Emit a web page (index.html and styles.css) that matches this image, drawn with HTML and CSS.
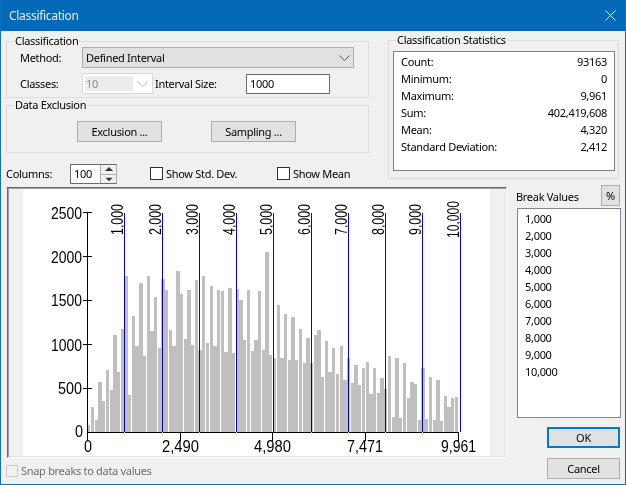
FILE: index.html
```html
<!DOCTYPE html>
<html lang="en">
<head>
<meta charset="utf-8">
<title>Classification</title>
<link rel="stylesheet" href="styles.css">
</head>
<body>
<div class="window">
  <header class="titlebar">
    <span class="title">Classification</span>
    <svg class="close" width="11" height="11" viewBox="0 0 11 11"><path d="M.5.5l10 10M10.500.5l-10 10"/></svg>
  </header>
  <div class="top">
    <div class="left-col">
      <fieldset class="group">
        <legend>Classification</legend>
        <div class="form-row">
          <span class="row-label">Method:</span>
          <div class="combo combo-method">
            <span>Defined Interval</span>
            <svg class="chev" width="11" height="6" viewBox="0 0 11 6"><path d="M.5.5l5 5 5-5"/></svg>
          </div>
        </div>
        <div class="form-row form-row-second">
          <span class="row-label">Classes:</span>
          <div class="combo-disabled">
            <span class="combo-disabled-value">10</span>
            <svg class="chev chev-light" width="11" height="6" viewBox="0 0 11 6"><path d="M.5.5l5 5 5-5"/></svg>
          </div>
          <span class="interval-label">Interval Size:</span>
          <div class="textbox interval-input">1000</div>
        </div>
      </fieldset>
      <fieldset class="group group-exclusion">
        <legend>Data Exclusion</legend>
        <div class="exclusion-buttons">
          <div class="btn btn-wide">Exclusion ...</div>
          <div class="btn btn-wide">Sampling ...</div>
        </div>
      </fieldset>
      <div class="columns-row">
        <span class="columns-label">Columns:</span>
        <div class="spin">
          <span class="spin-value">100</span>
          <div class="spin-buttons">
            <svg width="16" height="9" viewBox="0 0 16 9"><path class="tri" d="M8 2l4 4H4z"/></svg>
            <svg width="16" height="9" viewBox="0 0 16 9"><path class="tri" d="M4 3h8l-4 4z"/></svg>
          </div>
        </div>
        <div class="check check-std"><span class="box"></span><span>Show Std. Dev.</span></div>
        <div class="check"><span class="box"></span><span>Show Mean</span></div>
      </div>
    </div>
    <fieldset class="group group-stats">
      <legend>Classification Statistics</legend>
      <div class="stats">
        <div class="stat"><span>Count:</span><span>93163</span></div>
        <div class="stat"><span>Minimum:</span><span>0</span></div>
        <div class="stat"><span>Maximum:</span><span>9,961</span></div>
        <div class="stat"><span>Sum:</span><span>402,419,608</span></div>
        <div class="stat"><span>Mean:</span><span>4,320</span></div>
        <div class="stat"><span>Standard Deviation:</span><span>2,412</span></div>
      </div>
    </fieldset>
  </div>
  <div class="bottom">
    <div class="chart-col">
      <div class="chart-panel">
        <svg class="chart" width="467" height="267" viewBox="23 189 467 267">
          <g class="bars">
            <rect x="88" y="425" width="2" height="7"/><rect x="91" y="407" width="3" height="25"/><rect x="95" y="420" width="3" height="12"/><rect x="98" y="382" width="4" height="50"/><rect x="102" y="401" width="3" height="31"/><rect x="106" y="370" width="3" height="62"/><rect x="110" y="390" width="3" height="42"/><rect x="113" y="335" width="4" height="97"/><rect x="117" y="372" width="3" height="60"/><rect x="121" y="329" width="3" height="103"/>
            <rect x="124" y="276" width="4" height="156"/><rect x="128" y="395" width="3" height="37"/><rect x="132" y="316" width="3" height="116"/><rect x="135" y="346" width="4" height="86"/><rect x="139" y="283" width="4" height="149"/><rect x="143" y="356" width="3" height="76"/><rect x="147" y="276" width="3" height="156"/><rect x="150" y="331" width="4" height="101"/><rect x="154" y="297" width="3" height="135"/><rect x="158" y="348" width="3" height="84"/>
            <rect x="161" y="279" width="4" height="153"/><rect x="165" y="290" width="3" height="142"/><rect x="169" y="330" width="3" height="102"/><rect x="172" y="346" width="4" height="86"/><rect x="176" y="271" width="4" height="161"/><rect x="180" y="294" width="3" height="138"/><rect x="184" y="339" width="3" height="93"/><rect x="187" y="290" width="4" height="142"/><rect x="191" y="345" width="3" height="87"/><rect x="195" y="280" width="3" height="152"/>
            <rect x="198" y="350" width="4" height="82"/><rect x="202" y="276" width="3" height="156"/><rect x="206" y="343" width="3" height="89"/><rect x="210" y="286" width="3" height="146"/><rect x="213" y="346" width="4" height="86"/><rect x="217" y="290" width="3" height="142"/><rect x="221" y="291" width="3" height="141"/><rect x="224" y="352" width="4" height="80"/><rect x="228" y="288" width="4" height="144"/><rect x="232" y="353" width="3" height="79"/>
            <rect x="236" y="289" width="3" height="143"/><rect x="239" y="300" width="4" height="132"/><rect x="243" y="340" width="3" height="92"/><rect x="247" y="290" width="3" height="142"/><rect x="251" y="351" width="3" height="81"/><rect x="254" y="340" width="4" height="92"/><rect x="258" y="291" width="3" height="141"/><rect x="262" y="350" width="3" height="82"/><rect x="265" y="252" width="4" height="180"/><rect x="269" y="355" width="3" height="77"/>
            <rect x="273" y="358" width="3" height="74"/><rect x="277" y="305" width="3" height="127"/><rect x="280" y="358" width="4" height="74"/><rect x="284" y="314" width="3" height="118"/><rect x="288" y="360" width="3" height="72"/><rect x="291" y="317" width="4" height="115"/><rect x="295" y="360" width="3" height="72"/><rect x="299" y="329" width="3" height="103"/><rect x="303" y="363" width="3" height="69"/><rect x="306" y="338" width="4" height="94"/>
            <rect x="310" y="363" width="3" height="69"/><rect x="314" y="335" width="3" height="97"/><rect x="317" y="330" width="4" height="102"/><rect x="321" y="377" width="3" height="55"/><rect x="325" y="341" width="3" height="91"/><rect x="328" y="372" width="4" height="60"/><rect x="332" y="348" width="3" height="84"/><rect x="336" y="374" width="3" height="58"/><rect x="340" y="346" width="3" height="86"/><rect x="343" y="380" width="4" height="52"/>
            <rect x="347" y="358" width="3" height="74"/><rect x="351" y="383" width="3" height="49"/><rect x="354" y="365" width="4" height="67"/><rect x="358" y="385" width="3" height="47"/><rect x="362" y="368" width="3" height="64"/><rect x="366" y="362" width="3" height="70"/><rect x="369" y="394" width="4" height="38"/><rect x="373" y="368" width="3" height="64"/><rect x="377" y="393" width="3" height="39"/><rect x="380" y="378" width="4" height="54"/>
            <rect x="384" y="389" width="3" height="43"/><rect x="388" y="356" width="3" height="76"/><rect x="392" y="417" width="3" height="15"/><rect x="395" y="358" width="4" height="74"/><rect x="399" y="418" width="3" height="14"/><rect x="403" y="363" width="3" height="69"/><rect x="407" y="398" width="3" height="34"/><rect x="410" y="382" width="4" height="50"/><rect x="414" y="384" width="3" height="48"/><rect x="418" y="420" width="3" height="12"/>
            <rect x="421" y="368" width="4" height="64"/><rect x="425" y="419" width="3" height="13"/><rect x="429" y="377" width="3" height="55"/><rect x="433" y="420" width="3" height="12"/><rect x="436" y="380" width="4" height="52"/><rect x="440" y="421" width="3" height="11"/><rect x="444" y="396" width="3" height="36"/><rect x="447" y="407" width="4" height="25"/><rect x="451" y="398" width="3" height="34"/><rect x="455" y="397" width="3" height="35"/>
          </g>
          <g class="breaks">
            <rect x="124" y="213" width="1" height="219"/><rect x="162" y="213" width="1" height="219"/><rect x="199" y="213" width="1" height="219"/><rect x="236" y="213" width="1" height="219"/><rect x="273" y="213" width="1" height="219"/><rect x="311" y="213" width="1" height="219"/><rect x="348" y="213" width="1" height="219"/><rect x="385" y="213" width="1" height="219"/><rect x="422" y="213" width="1" height="219"/><rect x="460" y="213" width="1" height="219"/>
          </g>
          <g class="axes">
            <rect x="87" y="212" width="1" height="229"/><rect x="87" y="432" width="372" height="1"/>
            <rect x="83" y="212" width="9" height="1"/><rect x="83" y="256" width="9" height="1"/><rect x="83" y="300" width="9" height="1"/><rect x="83" y="344" width="9" height="1"/><rect x="83" y="388" width="9" height="1"/>
            <rect x="180" y="432" width="1" height="9"/><rect x="272" y="432" width="1" height="9"/><rect x="365" y="432" width="1" height="9"/><rect x="458" y="432" width="1" height="9"/>
          </g>
          <g class="marks">
            <rect x="124" y="432" width="1" height="1"/><rect x="162" y="432" width="1" height="1"/><rect x="199" y="432" width="1" height="1"/><rect x="236" y="432" width="1" height="1"/><rect x="348" y="432" width="1" height="1"/><rect x="385" y="432" width="1" height="1"/><rect x="422" y="432" width="1" height="1"/><rect x="311" y="432" width="1" height="1"/>
          </g>
          <g class="chart-text">
            <text x="51" y="219" textLength="31" lengthAdjust="spacingAndGlyphs">2500</text>
            <text x="51" y="263" textLength="31" lengthAdjust="spacingAndGlyphs">2000</text>
            <text x="51" y="306" textLength="31" lengthAdjust="spacingAndGlyphs">1500</text>
            <text x="51" y="351" textLength="31" lengthAdjust="spacingAndGlyphs">1000</text>
            <text x="58" y="394" textLength="24" lengthAdjust="spacingAndGlyphs">500</text>
            <text x="75" y="437" textLength="8" lengthAdjust="spacingAndGlyphs">0</text>
            <text x="84" y="452" textLength="8" lengthAdjust="spacingAndGlyphs">0</text>
            <text x="162" y="452" textLength="37" lengthAdjust="spacingAndGlyphs">2,490</text>
            <text x="254" y="452" textLength="37" lengthAdjust="spacingAndGlyphs">4,980</text>
            <text x="347" y="452" textLength="36" lengthAdjust="spacingAndGlyphs">7,471</text>
            <text x="441" y="452" textLength="35" lengthAdjust="spacingAndGlyphs">9,961</text>
            <text transform="translate(123 235) rotate(-90)" textLength="31" lengthAdjust="spacingAndGlyphs">1,000</text>
            <text transform="translate(161 235) rotate(-90)" textLength="31" lengthAdjust="spacingAndGlyphs">2,000</text>
            <text transform="translate(198 235) rotate(-90)" textLength="31" lengthAdjust="spacingAndGlyphs">3,000</text>
            <text transform="translate(235 235) rotate(-90)" textLength="31" lengthAdjust="spacingAndGlyphs">4,000</text>
            <text transform="translate(272 235) rotate(-90)" textLength="31" lengthAdjust="spacingAndGlyphs">5,000</text>
            <text transform="translate(310 235) rotate(-90)" textLength="31" lengthAdjust="spacingAndGlyphs">6,000</text>
            <text transform="translate(347 235) rotate(-90)" textLength="31" lengthAdjust="spacingAndGlyphs">7,000</text>
            <text transform="translate(384 235) rotate(-90)" textLength="31" lengthAdjust="spacingAndGlyphs">8,000</text>
            <text transform="translate(421 235) rotate(-90)" textLength="31" lengthAdjust="spacingAndGlyphs">9,000</text>
            <text transform="translate(459 238) rotate(-90)" textLength="37" lengthAdjust="spacingAndGlyphs">10,000</text>
          </g>
        </svg>
      </div>
      <div class="check check-disabled"><span class="box"></span><span>Snap breaks to data values</span></div>
    </div>
    <div class="side-col">
      <div class="break-head">
        <span class="break-label">Break Values</span>
        <div class="btn btn-percent">%</div>
      </div>
      <div class="break-list">
        <div class="break-item">1,000</div>
        <div class="break-item">2,000</div>
        <div class="break-item">3,000</div>
        <div class="break-item">4,000</div>
        <div class="break-item">5,000</div>
        <div class="break-item">6,000</div>
        <div class="break-item">7,000</div>
        <div class="break-item">8,000</div>
        <div class="break-item">9,000</div>
        <div class="break-item">10,000</div>
      </div>
      <div class="btn btn-dialog btn-default">OK</div>
      <div class="btn btn-dialog">Cancel</div>
    </div>
  </div>
</div>
</body>
</html>
```

FILE: styles.css
```css
* { box-sizing: border-box; }
html, body { margin: 0; padding: 0; }
body {
  width: 626px;
  height: 485px;
  overflow: hidden;
  font-family: "Noto Sans", sans-serif;
  font-size: 11px;
  letter-spacing: -0.3px;
  line-height: 14px;
  color: #000;
  background: #f0f0f0;
}
.window {
  width: 626px;
  height: 485px;
  border: 1px solid #0a72c0;
  display: flex;
  flex-direction: column;
  background: #f0f0f0;
}
.titlebar {
  flex: none;
  display: flex;
  align-items: center;
  justify-content: space-between;
  background: #0569b9;
  padding: 0 9px 0 8px;
  margin-top: -1px;
  height: 31px;
}
.title { font-size: 12px; color: #e4eff8; }
.close path { fill: none; stroke: #fff; stroke-width: 1; }
.top {
  display: flex;
  flex: none;
  height: 154px;
  padding: 3px 0 0 5px;
  gap: 19px;
}
.left-col { width: 363px; padding-top: 1px; }
.group {
  margin: 0;
  padding: 0;
  min-width: 0;
  border: 1px solid #dcdcdc;
}
.group legend {
  margin-left: 7px;
  padding: 0 1px;
  font-size: 11px;
  line-height: 12px;
}
.form-row { display: flex; align-items: center; padding-left: 13px; height: 21px; }
.form-row-second { margin: 5px 0 3px; }
.row-label { width: 62px; flex: none; }
.combo {
  height: 21px;
  display: flex;
  align-items: center;
  justify-content: space-between;
  background: #e1e1e1;
  border: 1px solid #adadad;
  padding: 0 3px;
}
.combo-method { width: 272px; }
.chev path { fill: none; stroke: #555; stroke-width: 1; }
.chev-light path { stroke: #bbb; }
.combo-disabled {
  width: 71px;
  height: 21px;
  display: flex;
  align-items: center;
  justify-content: space-between;
  background: #fff;
  border: 1px solid #d9d9d9;
  padding: 2px 4px 2px 2px;
}
.combo-disabled-value {
  width: 48px;
  height: 15px;
  line-height: 15px;
  background: #ececec;
  color: #8a8a8a;
  padding-left: 1px;
}
.interval-label { width: 91px; margin-left: 2px; flex: none; }
.textbox { background: #fff; border: 1px solid #6a6a6a; }
.interval-input { width: 84px; height: 20px; line-height: 18px; padding-left: 3px; }
.group-exclusion { margin-top: 1px; }
.exclusion-buttons { display: flex; gap: 49px; padding: 10px 0 10px 70px; }
.btn {
  display: flex;
  align-items: center;
  justify-content: center;
  background: #e1e1e1;
  border: 1px solid #adadad;
}
.btn-wide { width: 85px; height: 21px; }
.columns-row { display: flex; align-items: center; height: 21px; margin-top: 10px; }
.columns-label { width: 64px; flex: none; }
.spin {
  display: flex;
  width: 47px;
  height: 20px;
  background: #fff;
  border: 1px solid #6a6a6a;
  border-right-color: #adadad;
  margin-right: 33px;
  flex: none;
}
.spin-value { width: 29px; line-height: 18px; padding-left: 3px; }
.spin-buttons { display: flex; flex-direction: column; border-left: 1px solid #adadad; background: #f0f0f0; width: 16px; }
.spin-buttons svg { display: block; flex: none; }
.spin-buttons svg + svg { border-top: 1px solid #adadad; }
.tri { fill: #333; }
.check { display: flex; align-items: center; gap: 3px; }
.check-std { width: 127px; }
.box { width: 13px; height: 13px; background: #fff; border: 1px solid #333; flex: none; }
.group-stats { width: 231px; height: 145px; }
.stats {
  width: 222px;
  height: 120px;
  margin: 5px 0 0 4px;
  padding: 1px 7px 0;
  background: #fff;
  border: 1px solid #82828f;
}
.stat { display: flex; justify-content: space-between; height: 17px; line-height: 17px; }
.bottom { display: flex; flex: 1; min-height: 0; }
.chart-col { width: 516px; padding: 2px 0 0 6px; flex: none; }
.chart-panel {
  width: 500px;
  height: 271px;
  padding: 1px 0 0 15px;
  border: 1px solid;
  border-color: #696969 #fcfcfc #fcfcfc #696969;
  box-shadow: inset 1px 1px #a0a0a0, inset -1px -1px #e3e3e3;
}
.chart { display: block; background: #fff; }
.bars rect { fill: #bfbfbf; }
.breaks rect { fill: #0000ff; mix-blend-mode: multiply; }
.axes rect { fill: #000; }
.marks rect { fill: #ffe400; }
.chart-text text { font-family: "Liberation Sans", sans-serif; font-size: 16px; fill: #000; letter-spacing: 0; }
.check-disabled { margin: 6px 0 0 -1px; color: #6d6d6d; }
.check-disabled .box { border-color: #cccccc; background: #f0f0f0; height: 12px; width: 12px; }
.side-col { width: 104px; display: flex; flex-direction: column; align-items: flex-end; flex: none; }
.break-head { width: 105px; margin-left: -1px; display: flex; justify-content: space-between; align-items: flex-start; padding-right: 1px; height: 23px; }
.break-label { margin-top: 5px; }
.btn-percent { width: 19px; height: 21px; }
.break-list {
  width: 104px;
  height: 210px;
  background: #fff;
  border: 1px solid #828790;
  padding: 1px 0 0 7px;
}
.break-item { height: 17px; line-height: 17px; }
.btn-dialog { width: 73px; height: 21px; margin-right: 1px; }
.btn-default { border: 2px solid #0078d7; margin-top: 9px; margin-bottom: 10px; }
```
